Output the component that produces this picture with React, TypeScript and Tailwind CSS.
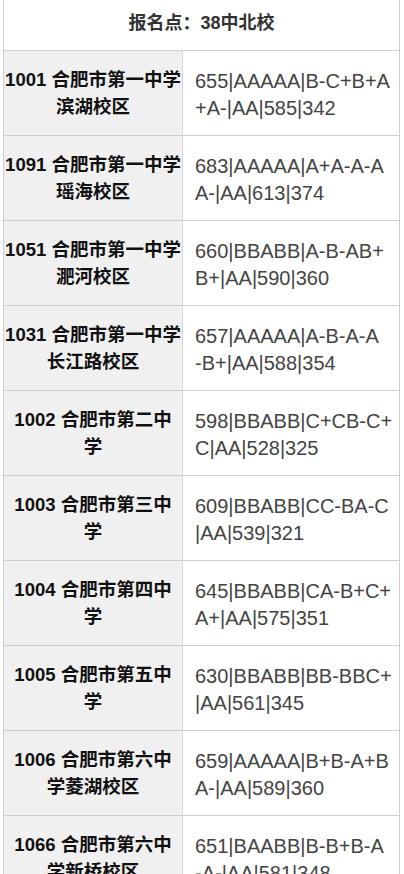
import React from "react";

const rows: [string, string, string, string][] = [
  ["1001 合肥市第一中学", "滨湖校区", "655|AAAAA|B-C+B+A", "+A-|AA|585|342"],
  ["1091 合肥市第一中学", "瑶海校区", "683|AAAAA|A+A-A-A", "A-|AA|613|374"],
  ["1051 合肥市第一中学", "淝河校区", "660|BBABB|A-B-AB+", "B+|AA|590|360"],
  ["1031 合肥市第一中学", "长江路校区", "657|AAAAA|A-B-A-A", "-B+|AA|588|354"],
  ["1002 合肥市第二中", "学", "598|BBABB|C+CB-C+", "C|AA|528|325"],
  ["1003 合肥市第三中", "学", "609|BBABB|CC-BA-C", "|AA|539|321"],
  ["1004 合肥市第四中", "学", "645|BBABB|CA-B+C+", "A+|AA|575|351"],
  ["1005 合肥市第五中", "学", "630|BBABB|BB-BBC+", "|AA|561|345"],
  ["1006 合肥市第六中", "学菱湖校区", "659|AAAAA|B+B-A+B", "A-|AA|589|360"],
  ["1066 合肥市第六中", "学新桥校区", "651|BAABB|B-B+B-A", "-A-|AA|581|348"],
];

export default function App() {
  return (
    <div
      className="w-[404px] h-[874px] overflow-hidden bg-white"
      style={{ fontFamily: '"Liberation Sans", "Noto Sans CJK SC", sans-serif' }}
    >
      <div className="ml-[3px] w-[397px] border-x border-[#cfcfcf]">
        <div className="h-[51px] border-b border-[#cfcfcf] flex items-center justify-center pb-[3px]">
          <span className="font-bold text-[18px] text-[#333]">报名点：38中北校</span>
        </div>
        {rows.map((r, i) => (
          <div key={i} className="grid grid-cols-[179px_1fr] h-[85px] border-b border-[#cfcfcf]">
            <div className="bg-[#f0f0f0] border-r border-[#d6d6d6] flex flex-col items-center justify-center text-center font-bold text-[18.5px] leading-[27px] text-[#111] whitespace-nowrap">
              <span>{r[0]}</span>
              <span>{r[1]}</span>
            </div>
            <div className="flex flex-col justify-center pl-[12px] pt-[4px] text-[20px] leading-[27px] text-[#444] whitespace-nowrap">
              <span>{r[2]}</span>
              <span>{r[3]}</span>
            </div>
          </div>
        ))}
      </div>
    </div>
  );
}
